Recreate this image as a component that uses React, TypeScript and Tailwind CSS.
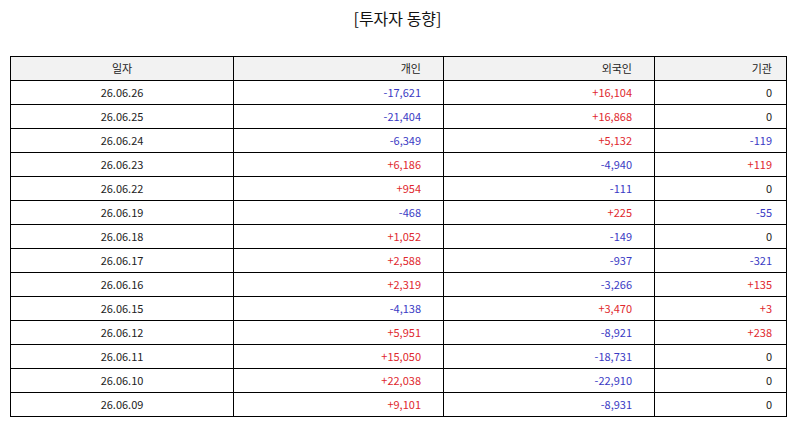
const rows: [string, string, string, string][] = [
  ['26.06.26', '-17,621', '+16,104', '0'],
  ['26.06.25', '-21,404', '+16,868', '0'],
  ['26.06.24', '-6,349', '+5,132', '-119'],
  ['26.06.23', '+6,186', '-4,940', '+119'],
  ['26.06.22', '+954', '-111', '0'],
  ['26.06.19', '-468', '+225', '-55'],
  ['26.06.18', '+1,052', '-149', '0'],
  ['26.06.17', '+2,588', '-937', '-321'],
  ['26.06.16', '+2,319', '-3,266', '+135'],
  ['26.06.15', '-4,138', '+3,470', '+3'],
  ['26.06.12', '+5,951', '-8,921', '+238'],
  ['26.06.11', '+15,050', '-18,731', '0'],
  ['26.06.10', '+22,038', '-22,910', '0'],
  ['26.06.09', '+9,101', '-8,931', '0'],
];

function tone(v: string) {
  if (v.startsWith('+')) return 'text-[#e0282e]';
  if (v.startsWith('-')) return 'text-[#3a3ac4]';
  return 'text-[#222]';
}

export default function App() {
  return (
    <div
      className="h-[425px] w-[795px] bg-white"
      style={{ fontFamily: '"Noto Sans CJK KR", "Noto Sans", sans-serif' }}
    >
      <h1 className="pt-[6px] text-center text-[16px] leading-[24px] text-[#111]">[투자자 동향]</h1>
      <table className="ml-[10px] mt-[26px] w-[776px] table-fixed border-collapse text-[11px] text-[#222]">
        <colgroup>
          <col className="w-[223px]" />
          <col className="w-[210px]" />
          <col className="w-[211px]" />
          <col className="w-[132px]" />
        </colgroup>
        <thead>
          <tr className="h-[24px] bg-[#f2f2f2]">
            <th className="border border-black text-center font-normal">일자</th>
            <th className="border border-black pr-[22px] text-right font-normal">개인</th>
            <th className="border border-black pr-[22px] text-right font-normal">외국인</th>
            <th className="border border-black pr-[14px] text-right font-normal">기관</th>
          </tr>
        </thead>
        <tbody>
          {rows.map(([d, a, b, c]) => (
            <tr key={d} className="h-[24px]">
              <td className="border border-black text-center">{d}</td>
              <td className={`border border-black pr-[22px] text-right ${tone(a)}`}>{a}</td>
              <td className={`border border-black pr-[22px] text-right ${tone(b)}`}>{b}</td>
              <td className={`border border-black pr-[14px] text-right ${tone(c)}`}>{c}</td>
            </tr>
          ))}
        </tbody>
      </table>
    </div>
  );
}
